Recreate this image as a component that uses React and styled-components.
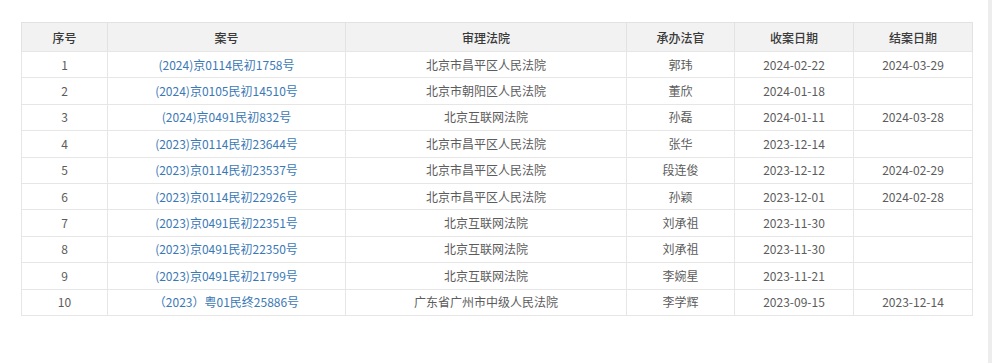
import React from "react";
import styled, { createGlobalStyle } from "styled-components";

const Global = createGlobalStyle`
  html, body { margin: 0; padding: 0; background: #fff; }
  body { font-family: "Noto Sans CJK SC", "Microsoft YaHei", sans-serif; }
`;

const Page = styled.div`
  display: flex;
  width: 992px;
  height: 363px;
  overflow: hidden;
`;

const Main = styled.div`
  flex: 1;
  padding: 22px 0 0 21px;
`;

const Scrollbar = styled.div`
  width: 4px;
  background: #ededed;
`;

const Table = styled.table`
  width: 951px;
  border-collapse: collapse;
  table-layout: fixed;
  font-size: 12px;
  border: 1px solid #e2e2e2;
`;

const Th = styled.th`
  height: 28px;
  padding: 0;
  background: #f2f2f2;
  color: #3a3a3a;
  font-weight: 500;
  text-align: center;
  border: 1px solid #e2e2e2;
  border-bottom-color: #e6e6e6;
`;

const Tr = styled.tr`
  height: 26.4px;
`;

const Td = styled.td`
  padding: 0 0 1px;
  text-align: center;
  color: ${(p) => (p.$link ? "#3b79b6" : "#5c5c5c")};
  border: 1px solid #e6e6e6;
  white-space: nowrap;
`;

const cols = [86, 238, 281, 108, 119, 119];
const heads = ["序号", "案号", "审理法院", "承办法官", "收案日期", "结案日期"];

const rows = [
  ["1", "(2024)京0114民初1758号", "北京市昌平区人民法院", "郭玮", "2024-02-22", "2024-03-29"],
  ["2", "(2024)京0105民初14510号", "北京市朝阳区人民法院", "董欣", "2024-01-18", ""],
  ["3", "(2024)京0491民初832号", "北京互联网法院", "孙磊", "2024-01-11", "2024-03-28"],
  ["4", "(2023)京0114民初23644号", "北京市昌平区人民法院", "张华", "2023-12-14", ""],
  ["5", "(2023)京0114民初23537号", "北京市昌平区人民法院", "段连俊", "2023-12-12", "2024-02-29"],
  ["6", "(2023)京0114民初22926号", "北京市昌平区人民法院", "孙颖", "2023-12-01", "2024-02-28"],
  ["7", "(2023)京0491民初22351号", "北京互联网法院", "刘承祖", "2023-11-30", ""],
  ["8", "(2023)京0491民初22350号", "北京互联网法院", "刘承祖", "2023-11-30", ""],
  ["9", "(2023)京0491民初21799号", "北京互联网法院", "李婉星", "2023-11-21", ""],
  ["10", "（2023）粤01民终25886号", "广东省广州市中级人民法院", "李学辉", "2023-09-15", "2023-12-14"],
];

export default function App() {
  return (
    <>
      <Global />
      <Page>
        <Main>
          <Table>
            <colgroup>
              {cols.map((w, i) => (
                <col key={i} style={{ width: w }} />
              ))}
            </colgroup>
            <thead>
              <tr>
                {heads.map((h) => (
                  <Th key={h}>{h}</Th>
                ))}
              </tr>
            </thead>
            <tbody>
              {rows.map((r) => (
                <Tr key={r[0]}>
                  {r.map((c, i) => (
                    <Td key={i} $link={i === 1}>
                      {c}
                    </Td>
                  ))}
                </Tr>
              ))}
            </tbody>
          </Table>
        </Main>
        <Scrollbar />
      </Page>
    </>
  );
}
